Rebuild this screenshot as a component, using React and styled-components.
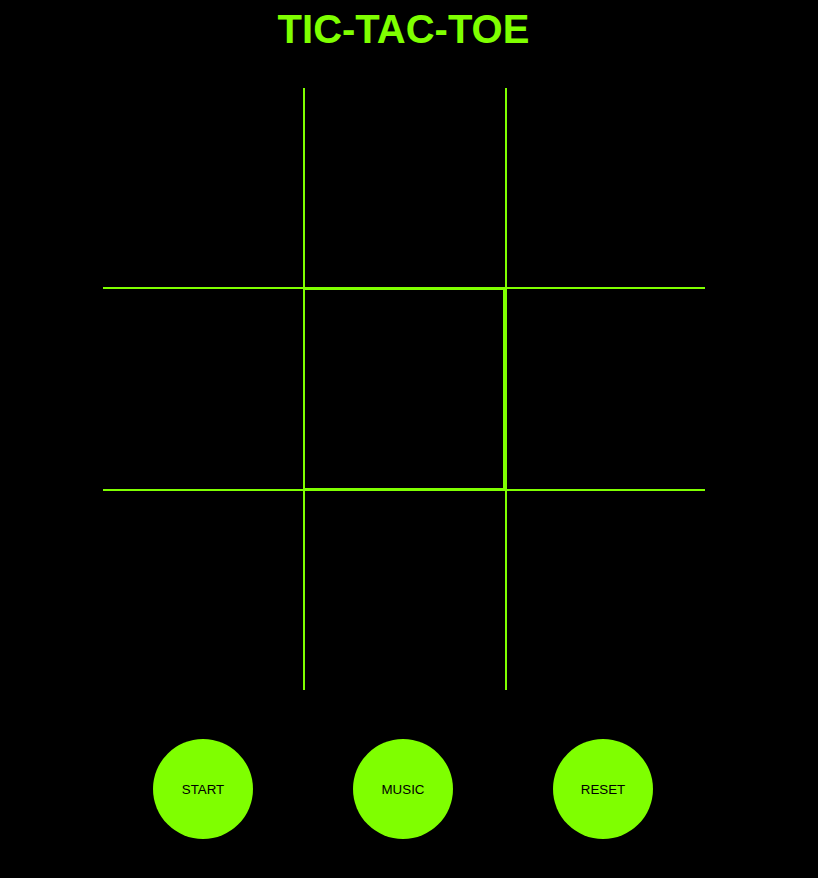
import React from 'react'
import styled, { createGlobalStyle } from 'styled-components'

const green = '#7fff00'

const GlobalStyle = createGlobalStyle`
  html, body {
    margin: 0;
    background: #000;
  }
`

const Page = styled.div`
  width: 808px;
  min-height: 878px;
  display: flex;
  flex-direction: column;
  align-items: center;
  font-family: "Liberation Sans", Arial, sans-serif;
`

const Title = styled.h1`
  margin: 6px 1px 0 0;
  font-size: 40px;
  line-height: 46px;
  font-weight: bold;
  color: ${green};
`

const Board = styled.div`
  margin-top: 36px;
  display: grid;
  grid-template-columns: 200px 200px 198px;
  grid-template-rows: 199px 200px 199px;
  gap: 2px;
  background: ${green};
`

const Cell = styled.div`
  background: #000;
  box-sizing: border-box;
  ${p => p.$center && `
    border-top: 1px solid ${green};
    border-bottom: 1px solid ${green};
    border-right: 2px solid ${green};
  `}
`

const Controls = styled.div`
  margin: 49px 2px 0 0;
  display: flex;
  gap: 100px;
`

const RoundButton = styled.button`
  width: 100px;
  height: 100px;
  border: none;
  border-radius: 50%;
  background: ${green};
  color: #000;
  font-family: "Liberation Sans", Arial, sans-serif;
  font-size: 13.33px;
  padding: 0;
  cursor: pointer;
`

const App = () => (
  <>
    <GlobalStyle />
    <Page>
      <Title>TIC-TAC-TOE</Title>
      <Board>
        {Array.from({ length: 9 }, (_, i) => (
          <Cell key={i} $center={i === 4} />
        ))}
      </Board>
      <Controls>
        <RoundButton>START</RoundButton>
        <RoundButton>MUSIC</RoundButton>
        <RoundButton>RESET</RoundButton>
      </Controls>
    </Page>
  </>
)

export default App
